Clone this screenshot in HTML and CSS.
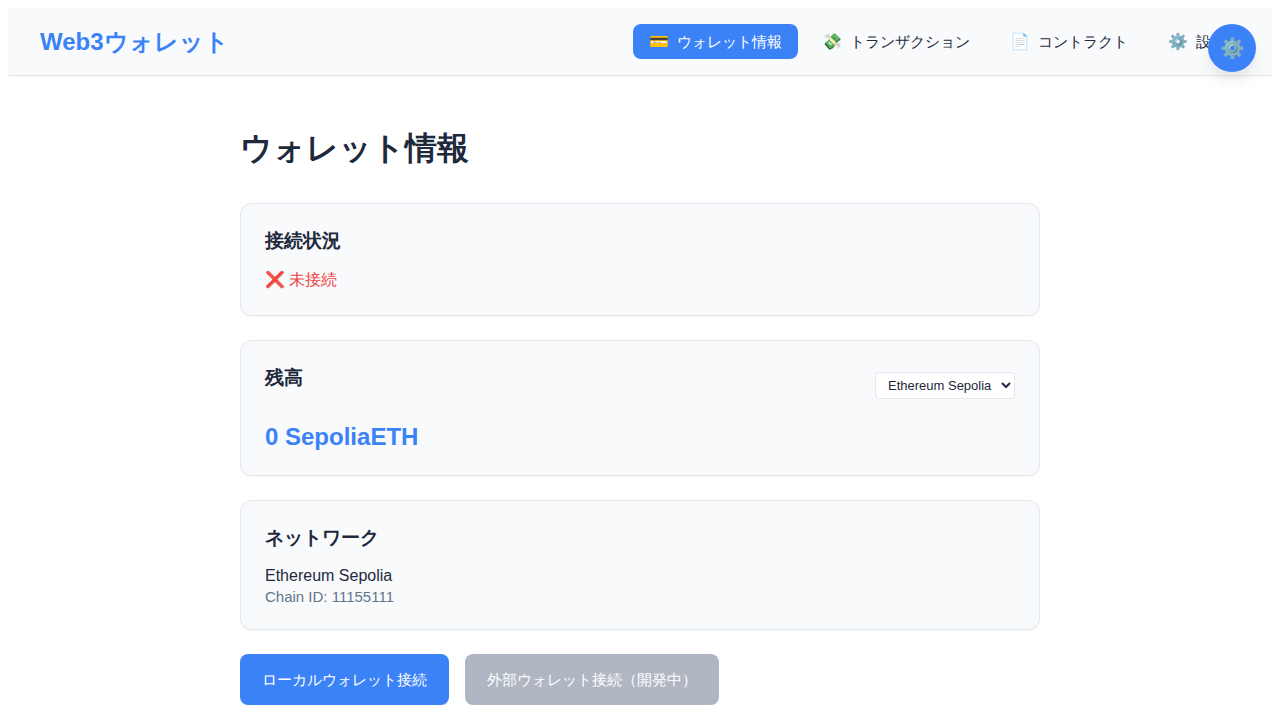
FILE: index.html
```html
<!DOCTYPE html>
<html lang="ja">
<head>
<meta charset="utf-8">
<meta name="viewport" content="width=device-width, initial-scale=1">
<title>Web3ウォレット</title>
<link rel="stylesheet" href="styles.css">
</head>
<body>
<header class="navbar">
  <div class="brand">Web3ウォレット</div>
  <nav class="nav">
    <button type="button" class="nav-item active"><span class="nav-icon">💳</span><span>ウォレット情報</span></button>
    <button type="button" class="nav-item"><span class="nav-icon">💸</span><span>トランザクション</span></button>
    <button type="button" class="nav-item"><span class="nav-icon">📄</span><span>コントラクト</span></button>
    <button type="button" class="nav-item"><span class="nav-icon">⚙️</span><span>設定</span></button>
  </nav>
</header>
<button type="button" class="fab" aria-label="設定を開く">⚙️</button>
<main class="page">
  <h1 class="page-title">ウォレット情報</h1>
  <section class="card">
    <h2 class="card-title">接続状況</h2>
    <div class="status">❌ 未接続</div>
  </section>
  <section class="card">
    <div class="card-head">
      <h2 class="card-title">残高</h2>
      <select class="network-select" aria-label="ネットワーク選択"><option>Ethereum Sepolia</option></select>
    </div>
    <div class="balance">0 SepoliaETH</div>
  </section>
  <section class="card">
    <h2 class="card-title">ネットワーク</h2>
    <div class="network-name">Ethereum Sepolia</div>
    <div class="chain">Chain ID: 11155111</div>
  </section>
  <div class="actions">
    <button type="button" class="btn">ローカルウォレット接続</button>
    <button type="button" class="btn" disabled>外部ウォレット接続（開発中）</button>
  </div>
</main>
</body>
</html>
```
FILE: styles.css
```css
* { box-sizing: border-box; }
html { scrollbar-width: none; }
body {
  margin: 8px;
  background: #fff;
  color: #1e293b;
  font-family: "Liberation Sans", sans-serif;
  font-size: 16px;
}
button, select { font-family: inherit; }
.navbar {
  display: flex;
  align-items: center;
  justify-content: space-between;
  padding: 16px 30px 16px 32px;
  background: #f8fafc;
  border-bottom: 1px solid #e2e8f0;
  box-shadow: 0 1px 2px rgba(0, 0, 0, 0.05);
}
.brand { font-size: 24px; font-weight: 700; line-height: 35px; color: #3b82f6; }
.nav { display: flex; gap: 8px; }
.nav-item {
  display: flex;
  align-items: center;
  gap: 8px;
  padding: 6px 16px;
  border: 0;
  border-radius: 8px;
  background: transparent;
  color: #1e293b;
  font-size: 15px;
  line-height: 23px;
}
.nav-icon { font-size: 16px; }
.active { background: #3b82f6; color: #fff; }
.fab {
  position: fixed;
  top: 24px;
  right: 24px;
  width: 48px;
  height: 48px;
  padding: 0;
  border: 0;
  border-radius: 50%;
  background: #3b82f6;
  color: #fff;
  font-size: 20px;
  box-shadow: 0 10px 15px -3px rgba(0, 0, 0, 0.1);
}
.page { max-width: 864px; margin: 0 auto; padding: 48px 32px 32px; }
.page-title { margin: 0 0 30px; font-size: 32px; line-height: 49px; }
.card {
  margin-bottom: 24px;
  padding: 24px;
  background: #f8fafc;
  border: 1px solid #e2e8f0;
  border-radius: 12px;
  box-shadow: 0 1px 2px rgba(0, 0, 0, 0.05);
}
.card-title { margin: 0 0 14px; font-size: 19px; line-height: 26px; }
.status { color: #ef4444; line-height: 23px; }
.card-head { display: flex; align-items: center; justify-content: space-between; margin-bottom: 18px; }
.network-select {
  padding: 4px 6px 4px 8px;
  border: 1px solid #e2e8f0;
  border-radius: 4px;
  background: #fff;
  color: #1e293b;
  font-size: 13px;
}
.balance { color: #3b82f6; font-size: 24px; font-weight: 700; line-height: 28px; }
.network-name { line-height: 22px; }
.chain { margin-top: 2px; color: #64748b; font-size: 15px; line-height: 16px; }
.actions { display: flex; gap: 16px; }
.btn {
  padding: 14px 22px;
  border: 0;
  border-radius: 8px;
  background: #3b82f6;
  color: #fff;
  font-size: 15px;
  line-height: 23px;
}
.btn:disabled { background: #b0b7c3; }
```
